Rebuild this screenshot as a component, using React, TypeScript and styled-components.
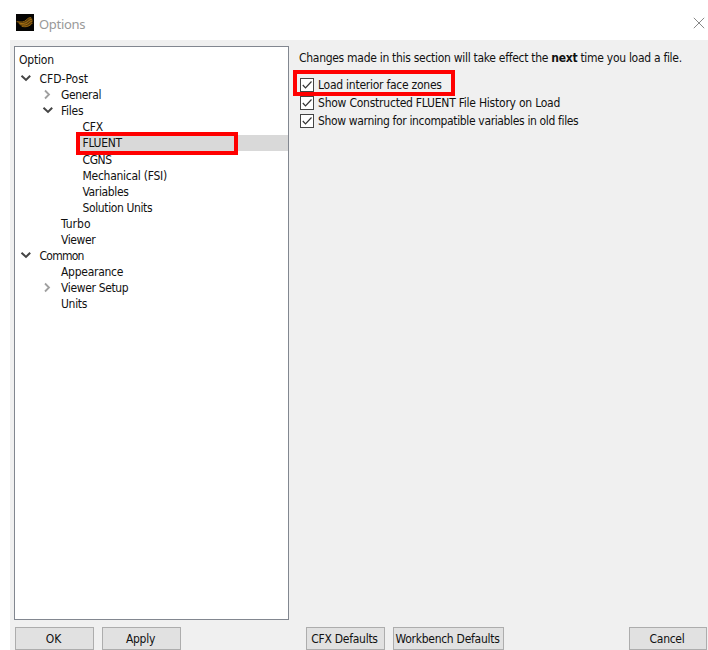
import React from 'react';
import styled, { createGlobalStyle } from 'styled-components';

const Global = createGlobalStyle`
  * { box-sizing: border-box; }
  html, body { margin: 0; background: #fff; overflow: hidden; }
  body { font: 12px/16px "DejaVu Sans Condensed", "DejaVu Sans", sans-serif; color: #111; }
`;
const Dialog = styled.div`
  width: 708px;
  height: 650px;
  padding-left: 10px;
  display: flex;
  flex-direction: column;
`;
const TitleBar = styled.header`
  height: 40px;
  flex: none;
  display: flex;
  align-items: center;
  padding: 5px 3px 0 6px;
`;
const Title = styled.h1`
  flex: 1;
  margin: 2px 0 0 5px;
  font: 13px/18px "Noto Sans", "Open Sans", sans-serif;
  letter-spacing: -0.3px;
  color: #999;
`;
const Close = styled.button`
  padding: 0;
  border: 0;
  background: none;
  width: 12px;
  height: 12px;
  display: flex;
`;
const Body = styled.main`
  flex: 1;
  background: #f0f0f0;
  padding: 6px 0 0 4px;
  display: flex;
  flex-direction: column;
`;
const Panes = styled.div`
  height: 574px;
  display: flex;
`;
const Tree = styled.section`
  width: 275px;
  border: 1px solid #828790;
  background: #fff;
  padding-top: 5px;
`;
const Text = styled.span<{ $track?: number }>`
  white-space: pre;
  letter-spacing: ${(p) => p.$track ?? -0.27}px;
`;
const TreeHeader = styled.div`
  height: 19px;
  padding-left: 4px;
`;
const Row = styled.div<{ $level: number; $selected?: boolean }>`
  position: relative;
  height: 16.1px;
  display: flex;
  align-items: center;
  padding-left: ${(p) => 5 + p.$level * 21.5}px;
  background: ${(p) => (p.$selected ? 'linear-gradient(to right, transparent 64px, #d9d9d9 64px)' : 'transparent')};
`;
const Arrow = styled.span`
  width: 19.5px;
  height: 16px;
  flex: none;
  display: flex;
  align-items: center;
`;
const Highlight = styled.span<{ $left: number; $top: number; $height: number }>`
  position: absolute;
  left: ${(p) => p.$left}px;
  top: ${(p) => p.$top}px;
  width: 162px;
  height: ${(p) => p.$height}px;
  border: 4px solid #f00;
  z-index: 1;
`;
const Settings = styled.section`
  padding: 4px 0 0 10px;
`;
const Note = styled.p`
  margin: 0 0 10px;
`;
const CheckRow = styled.label`
  position: relative;
  height: 18px;
  display: flex;
  align-items: center;
  gap: 4px;
`;
const Box = styled.span`
  width: 14px;
  height: 14px;
  border: 1px solid #444;
  background: #fff;
  display: flex;
  margin-left: 1px;
`;
const Footer = styled.footer`
  display: flex;
  padding: 7px 0 0 1px;
`;
const Button = styled.button<{ $width: number; $before?: number }>`
  width: ${(p) => p.$width}px;
  flex: none;
  height: 23px;
  margin-left: ${(p) => p.$before ?? 0}px;
  padding: 0 2px 0 0;
  border: 1px solid #adadad;
  background: #e1e1e1;
  font: inherit;
  color: inherit;
`;

type Item = { label: string; level: number; open?: boolean; selected?: boolean; track?: number };
const items: Item[] = [
  { label: 'CFD-Post', level: 0, open: true, track: 0 },
  { label: 'General', level: 1, open: false, track: -0.35 },
  { label: 'Files', level: 1, open: true },
  { label: 'CFX', level: 2 },
  { label: 'FLUENT', level: 2, selected: true, track: -0.3 },
  { label: 'CGNS', level: 2, track: -0.4 },
  { label: 'Mechanical (FSI)', level: 2 },
  { label: 'Variables', level: 2, track: -0.35 },
  { label: 'Solution Units', level: 2, track: -0.38 },
  { label: 'Turbo', level: 1, track: 0 },
  { label: 'Viewer', level: 1, track: -0.4 },
  { label: 'Common', level: 0, open: true, track: -0.75 },
  { label: 'Appearance', level: 1 },
  { label: 'Viewer Setup', level: 1, open: false, track: -0.35 },
  { label: 'Units', level: 1, track: -0.3 },
];
const checks = [
  { label: 'Load interior face zones', marked: true, track: -0.25 },
  { label: 'Show Constructed FLUENT File History on Load', track: -0.23 },
  { label: 'Show warning for incompatible variables in old files', track: -0.355 },
];

const Chevron = ({ open }: { open: boolean }) => (
  <svg width="12" height="12" viewBox="0 0 12 12" fill="none">
    {open ? (
      <path d="M1.500 2.800 6 6.900l4.200-4.100" stroke="#444" strokeWidth="2" />
    ) : (
      <path d="m3 1.500 4 4-4 4" stroke="#a0a0a0" strokeWidth="1.800" />
    )}
  </svg>
);
const Logo = () => (
  <svg width="18" height="17" viewBox="0 0 18 17" fill="none">
    <path fill="#050403" d="M0 0h18v17H0z" />
    <path fill="#5d3e0c" d="M1.500 8C5 8.500 6.500 9 9 7.500c2-1.300 3-3.500 6-3.700l1.500 1-.5 4.400c-2 3-5 3.800-8 3.200-2-.5-3-1.600-4-2.400z" />
    <g stroke="#b97c13" strokeWidth=".8" strokeLinecap="round">
      <path d="M1 7.700c3.500.2 5 .8 7.500-.4 2.500-1.300 3-3.800 6.300-3.800" />
      <path d="M3 9.200c3 .6 5 .5 7-.6 2.200-1.200 3-3.100 5.500-3.300" />
      <path d="M4 10.700c3 .7 5 .5 7.300-.5C13.500 9.200 14 7.300 16.300 7" />
      <path d="M6 12.400c4 .9 7.500.2 10.300-3.300" />
    </g>
  </svg>
);

export default function App() {
  return (
    <Dialog>
      <Global />
      <TitleBar>
        <Logo />
        <Title>Options</Title>
        <Close aria-label="Close">
          <svg width="12" height="12" viewBox="0 0 12 12">
            <path d="m.8.8 10.400 10.400M11.200.8.8 11.200" stroke="#888" strokeWidth="1" />
          </svg>
        </Close>
      </TitleBar>
      <Body>
        <Panes>
          <Tree>
            <TreeHeader><Text $track={-0.2}>Option</Text></TreeHeader>
            {items.map((it) => (
              <Row key={it.label} $level={it.level} $selected={it.selected}>
                <Arrow>{it.open !== undefined && <Chevron open={it.open} />}</Arrow>
                <Text $track={it.track}>{it.label}</Text>
                {it.selected && <Highlight $left={61} $top={-3} $height={23} />}
              </Row>
            ))}
          </Tree>
          <Settings>
            <Note>
              <Text $track={-0.29}>Changes made in this section will take effect the <b>next</b> time you load a file.</Text>
            </Note>
            {checks.map((c) => (
              <CheckRow key={c.label}>
                <Box>
                  <svg width="12" height="12" viewBox="0 0 12 12" fill="none">
                    <path d="m1.800 6 2.700 2.800 6-6.300" stroke="#333" strokeWidth="1.200" />
                  </svg>
                </Box>
                <Text $track={c.track}>{c.label}</Text>
                {c.marked && <Highlight $left={-6} $top={-6} $height={26} />}
              </CheckRow>
            ))}
          </Settings>
        </Panes>
        <Footer>
          <Button $width={79}><Text $track={0}>OK</Text></Button>
          <Button $width={79} $before={8}><Text>Apply</Text></Button>
          <Button $width={79} $before={125}><Text>CFX Defaults</Text></Button>
          <Button $width={111} $before={8}><Text>Workbench Defaults</Text></Button>
          <Button $width={78} $before={125}><Text>Cancel</Text></Button>
        </Footer>
      </Body>
    </Dialog>
  );
}
